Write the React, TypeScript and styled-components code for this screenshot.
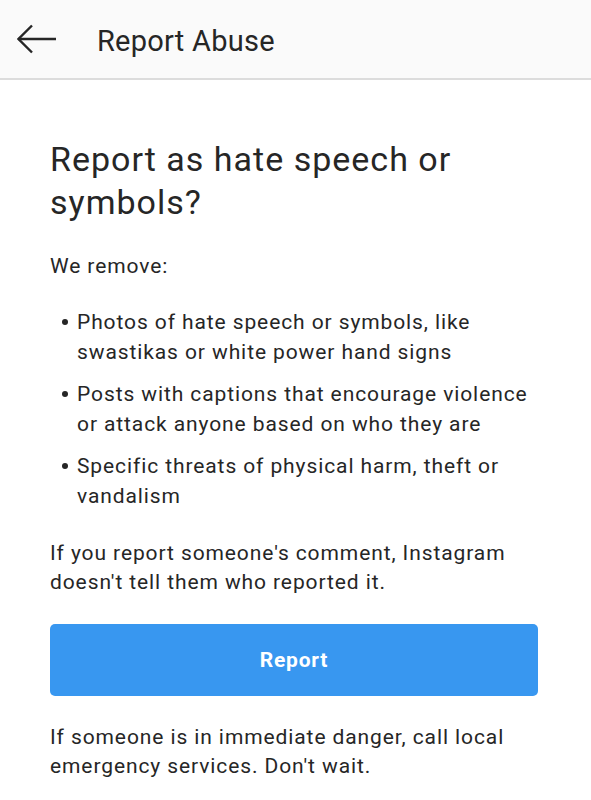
import React from "react";
import styled, { createGlobalStyle } from "styled-components";

const Global = createGlobalStyle`
  html, body { margin: 0; padding: 0; background: #ffffff; }
  body { font-family: Roboto, "Noto Sans", sans-serif; color: #262626; -webkit-font-smoothing: antialiased; }
  * { box-sizing: border-box; }
`;

const Page = styled.div`
  width: 591px;
  min-height: 800px;
  background: #fff;
`;

const Header = styled.header`
  height: 80px;
  background: #fafafa;
  border-bottom: 2px solid #dcdcdc;
  display: flex;
  align-items: center;
  padding-left: 17px;
`;

const BackButton = styled.button`
  border: none;
  background: none;
  padding: 0;
  width: 40px;
  height: 30px;
  display: flex;
  align-items: center;
  justify-content: center;
  color: #262626;
  cursor: pointer;
`;

const HeaderTitle = styled.h1`
  margin: 4px 0 0 40px;
  font-size: 29px;
  font-weight: 400;
  letter-spacing: 0.25px;
  color: #262626;
  line-height: 1;
`;

const Content = styled.main`
  padding: 58px 50px 30px 50px;
  display: flex;
  flex-direction: column;
`;

const Heading = styled.h2`
  margin: 0;
  font-size: 34px;
  font-weight: 400;
  line-height: 43px;
  letter-spacing: 1px;
  color: #262626;
`;

const Paragraph = styled.p<{ $top?: number }>`
  margin: ${(p) => p.$top ?? 0}px 0 0 0;
  font-size: 21px;
  line-height: 29px;
  letter-spacing: 0.9px;
  color: #262626;
`;

const List = styled.ul`
  list-style: none;
  margin: 26px 0 0 0;
  padding: 0 0 0 12px;
  display: flex;
  flex-direction: column;
  gap: 12px;
`;

const Item = styled.li`
  display: flex;
  font-size: 21px;
  line-height: 30px;
  letter-spacing: 0.9px;
  color: #262626;
`;

const Bullet = styled.span`
  width: 6px;
  height: 6px;
  border-radius: 50%;
  background: #262626;
  flex: none;
  margin: 12px 9px 0 0;
`;

const PrimaryButton = styled.button`
  margin-top: 27px;
  height: 72px;
  width: 488px;
  border: none;
  border-radius: 5px;
  background: #3897f0;
  color: #fff;
  font-family: Roboto, "Noto Sans", sans-serif;
  font-size: 21px;
  font-weight: 700;
  letter-spacing: 0.8px;
  cursor: pointer;
`;

const items = [
  "Photos of hate speech or symbols, like swastikas or white power hand signs",
  "Posts with captions that encourage violence or attack anyone based on who they are",
  "Specific threats of physical harm, theft or vandalism",
];

export default function App() {
  return (
    <Page>
      <Global />
      <Header>
        <BackButton aria-label="Back">
          <svg width="40" height="30" viewBox="0 0 40 30" fill="none" stroke="#262626" strokeWidth="2.4" strokeLinecap="butt" strokeLinejoin="miter">
            <path d="M1.5 15 H39" />
            <path d="M15 1.5 L1.5 15 L15 28.5" />
          </svg>
        </BackButton>
        <HeaderTitle>Report Abuse</HeaderTitle>
      </Header>
      <Content>
        <Heading>Report as hate speech or symbols?</Heading>
        <Paragraph $top={28}>We remove:</Paragraph>
        <List>
          {items.map((t) => (
            <Item key={t}>
              <Bullet />
              <span>{t}</span>
            </Item>
          ))}
        </List>
        <Paragraph $top={28}>
          If you report someone's comment, Instagram doesn't tell them who reported it.
        </Paragraph>
        <PrimaryButton>Report</PrimaryButton>
        <Paragraph $top={27}>
          If someone is in immediate danger, call local emergency services. Don't wait.
        </Paragraph>
      </Content>
    </Page>
  );
}
